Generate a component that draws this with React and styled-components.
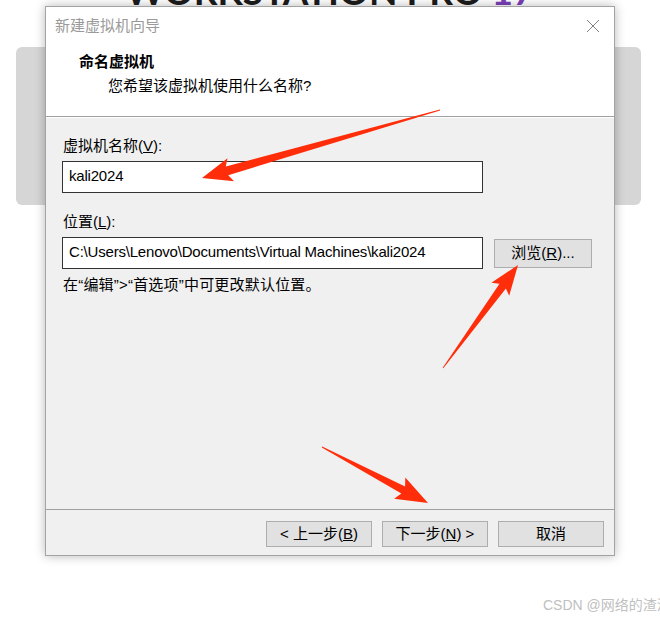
import React from 'react';
import styled, { createGlobalStyle } from 'styled-components';

const GlobalStyle = createGlobalStyle`
  html, body {
    margin: 0;
    padding: 0;
    background: #ffffff;
  }
  body {
    font-family: "Liberation Sans", "Noto Sans CJK SC", sans-serif;
  }
`;

const ARROWS = [
  { tail: [440, 110], tip: [202, 178], head: 26, wing: 12, neck: 4.5 },
  { tail: [443, 368], tip: [518, 265], head: 26, wing: 11, neck: 4 },
  { tail: [322, 447], tip: [428, 503], head: 28, wing: 12, neck: 4 },
];

// tapered arrow: thin tail, widening shaft, barbed head
const arrowPoints = ({ tail, tip, head, wing, neck }) => {
  const dx = tip[0] - tail[0];
  const dy = tip[1] - tail[1];
  const len = Math.hypot(dx, dy);
  const ux = dx / len;
  const uy = dy / len;
  const nx = -uy;
  const ny = ux;
  const bx = tip[0] - ux * head;
  const by = tip[1] - uy * head;
  const pt = (x, y) => `${x.toFixed(1)},${y.toFixed(1)}`;
  return [
    pt(tail[0] + nx * 0.4, tail[1] + ny * 0.4),
    pt(bx + nx * neck, by + ny * neck),
    pt(bx - ux * 4 + nx * wing, by - uy * 4 + ny * wing),
    pt(tip[0], tip[1]),
    pt(bx - ux * 4 - nx * wing, by - uy * 4 - ny * wing),
    pt(bx - nx * neck, by - ny * neck),
    pt(tail[0] - nx * 0.4, tail[1] - ny * 0.4),
  ].join(' ');
};

const Key = ({ children }) => <u>{children}</u>;

const App = () => (
  <>
    <GlobalStyle />
    <Canvas>
      <Desktop>
        <Brand>
          WORKSTATION PRO <Version>17</Version>
        </Brand>
        <Panel />
      </Desktop>

      <Dialog>
        <TitleBar>
          <TitleText>新建虚拟机向导</TitleText>
          <CloseButton aria-label="关闭">
            <svg width="14" height="14" viewBox="0 0 14 14">
              <path d="M1 1 L13 13 M13 1 L1 13" stroke="#808080" strokeWidth="1" fill="none" />
            </svg>
          </CloseButton>
        </TitleBar>

        <Header>
          <HeaderTitle>命名虚拟机</HeaderTitle>
          <HeaderSub>您希望该虚拟机使用什么名称?</HeaderSub>
        </Header>

        <Body>
          <Label>虚拟机名称(<Key>V</Key>):</Label>
          <TextBox>kali2024</TextBox>

          <Label $gap={19}>位置(<Key>L</Key>):</Label>
          <Row>
            <TextBox>C:\Users\Lenovo\Documents\Virtual Machines\kali2024</TextBox>
            <Button $width={98} $height={29}>
              浏览(<Key>R</Key>)...
            </Button>
          </Row>
          <Hint>在“编辑”&gt;“首选项”中可更改默认位置。</Hint>
        </Body>

        <Footer>
          <Button>&lt; 上一步(<Key>B</Key>)</Button>
          <Button>下一步(<Key>N</Key>) &gt;</Button>
          <Button>取消</Button>
        </Footer>
      </Dialog>

      <Annotations width="660" height="619" viewBox="0 0 660 619">
        {ARROWS.map((a, i) => (
          <polygon key={i} points={arrowPoints(a)} fill="#ff2d0a" />
        ))}
      </Annotations>

      <Watermark>CSDN @网络的渣渣</Watermark>
    </Canvas>
  </>
);

const Canvas = styled.div`
  position: relative;
  width: 660px;
  height: 619px;
  overflow: hidden;
  background: #ffffff;
`;

const Desktop = styled.div`
  display: flex;
  flex-direction: column;
`;

const Brand = styled.div`
  margin-top: -29px;
  height: 40px;
  line-height: 40px;
  text-align: center;
  font-family: Lato, "Noto Sans", sans-serif;
  font-size: 37px;
  font-weight: 700;
  color: #1c1c1c;
  white-space: nowrap;
`;

const Version = styled.span`
  color: #7b3fb8;
`;

const Panel = styled.div`
  margin: 36px 19px 0 16px;
  height: 158px;
  border-radius: 6px;
  background: #d6d6d6;
`;

const Dialog = styled.div`
  position: absolute;
  left: 45px;
  top: 6px;
  width: 568px;
  height: 548px;
  border: 1px solid #a3a3a3;
  background: #f0f0f0;
  display: flex;
  flex-direction: column;
  box-shadow: 0 0 10px rgba(0, 0, 0, 0.28);
  font-size: 15px;
  color: #000;
`;

const TitleBar = styled.div`
  height: 37px;
  background: #ffffff;
  display: flex;
  align-items: center;
  justify-content: space-between;
  padding: 0 14px 0 9px;
`;

const TitleText = styled.span`
  color: #9a9a9a;
  line-height: 20px;
`;

const CloseButton = styled.span`
  display: flex;
  width: 14px;
  height: 14px;
`;

const Header = styled.div`
  background: #ffffff;
  padding: 8px 0 20px 33px;
  display: flex;
  flex-direction: column;
  gap: 4px;
  border-bottom: 1px solid #a0a0a0;
  box-shadow: 0 1px 0 #ffffff;
`;

const HeaderTitle = styled.div`
  font-weight: 700;
  line-height: 20px;
`;

const HeaderSub = styled.div`
  padding-left: 29px;
  line-height: 20px;
`;

const Body = styled.div`
  flex: 1;
  margin-top: 1px;
  padding: 18px 0 0 16px;
  display: flex;
  flex-direction: column;
  align-items: flex-start;
`;

const Label = styled.div`
  margin-top: ${props => props.$gap || 0}px;
  line-height: 20px;
  padding-left: 1px;
`;

const Row = styled.div`
  display: flex;
  align-items: center;
  gap: 11px;
`;

const TextBox = styled.div`
  box-sizing: border-box;
  width: 421px;
  height: 32px;
  margin-top: 5px;
  padding: 0 6px;
  border: 1px solid #333333;
  background: #ffffff;
  line-height: 28px;
  letter-spacing: -0.2px;
  white-space: nowrap;
  overflow: hidden;
`;

const Hint = styled.div`
  margin-top: 6px;
  line-height: 20px;
  padding-left: 1px;
  letter-spacing: 0.2px;
`;

const Button = styled.div`
  box-sizing: border-box;
  width: ${props => props.$width || 106}px;
  height: ${props => props.$height || 26}px;
  margin-top: ${props => (props.$height ? 5 : 0)}px;
  border: 1px solid #adadad;
  background: #e1e1e1;
  display: flex;
  align-items: center;
  justify-content: center;
  line-height: 20px;
  white-space: pre;
`;

const Footer = styled.div`
  height: 46px;
  box-sizing: border-box;
  border-top: 1px solid #a0a0a0;
  padding: 11px 10px 0 0;
  display: flex;
  justify-content: flex-end;
  align-items: flex-start;
  gap: 10px;
`;

const Annotations = styled.svg`
  position: absolute;
  left: 0;
  top: 0;
  pointer-events: none;
`;

const Watermark = styled.div`
  position: absolute;
  left: 543px;
  top: 597px;
  font-size: 14px;
  line-height: 16px;
  color: #c0c0c0;
  white-space: nowrap;
`;

export default App;
